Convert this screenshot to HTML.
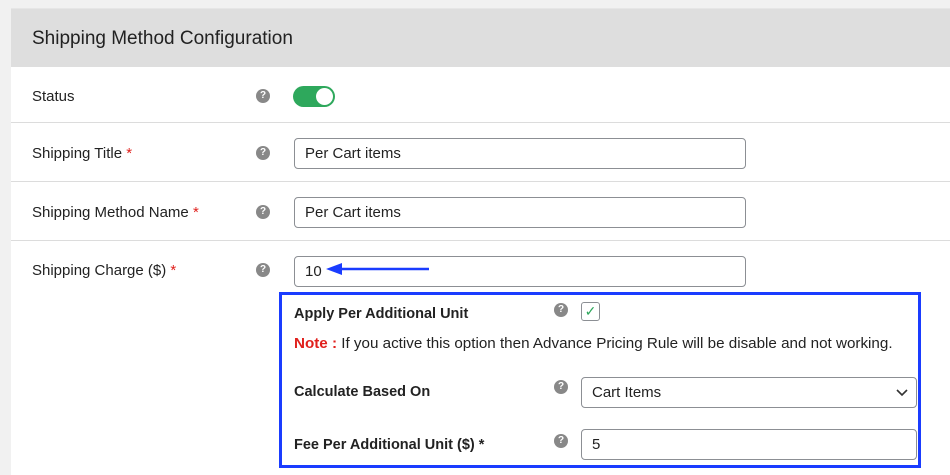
<!DOCTYPE html>
<html><head><style>
body{margin:0;width:950px;height:475px;background:#f1f1f1;font-family:"Liberation Sans",Arial,sans-serif;color:#1d2327;position:relative;overflow:hidden}
.panel{position:absolute;left:11px;top:8px;width:939px;height:467px;background:#fff}
.hdr{position:absolute;left:0;top:0;width:939px;height:58px;background:#dedede;border-top:1px solid #e6e6e6}
.hdr span{position:absolute;left:21px;top:19px;font-size:19px;color:#222}
.line{position:absolute;left:11px;width:939px;height:1px;background:#dcdcdc}
.lab{position:absolute;left:32px;font-size:15px;color:#222}
.req{color:#e0201c}
.q{position:absolute;width:14px;height:14px;border-radius:50%;background:#888;color:#fff;font-size:10px;font-weight:bold;text-align:center;line-height:14px}
.inp{position:absolute;border:1px solid #8c8f94;border-radius:4px;background:#fff;font-size:15px;box-sizing:border-box;padding-left:10px;color:#222}
.b{font-weight:bold;font-size:14.5px;position:absolute;color:#222}
</style></head><body>
<div class="panel"><div class="hdr"><span>Shipping Method Configuration</span></div></div>
<div class="line" style="top:122px"></div>
<div class="line" style="top:181px"></div>
<div class="line" style="top:240px"></div>

<div class="lab" style="top:88px">Status</div>
<div class="q" style="left:256px;top:89px">?</div>
<div style="position:absolute;left:293px;top:86px;width:42px;height:21px;border-radius:11px;background:#2ea85c"></div>
<div style="position:absolute;left:316px;top:88px;width:17px;height:17px;border-radius:50%;background:#fff"></div>

<div class="lab" style="top:145px">Shipping Title <span class="req">*</span></div>
<div class="q" style="left:256px;top:146px">?</div>
<div class="inp" style="left:294px;top:138px;width:452px;height:31px;line-height:29px">Per Cart items</div>

<div class="lab" style="top:204px">Shipping Method Name <span class="req">*</span></div>
<div class="q" style="left:256px;top:205px">?</div>
<div class="inp" style="left:294px;top:197px;width:452px;height:31px;line-height:29px">Per Cart items</div>

<div class="lab" style="top:262px">Shipping Charge ($) <span class="req">*</span></div>
<div class="q" style="left:256px;top:263px">?</div>
<div class="inp" style="left:294px;top:256px;width:452px;height:31px;line-height:29px">10</div>
<svg style="position:absolute;left:326px;top:262px" width="106" height="14"><line x1="12" y1="7" x2="103" y2="7" stroke="#1a3cff" stroke-width="2.5"/><polygon points="0,7 16,1 16,13" fill="#1a3cff"/></svg>

<div style="position:absolute;left:279px;top:292px;width:636px;height:170px;border:3px solid #1a3cff"></div>
<div class="b" style="left:294px;top:306px">Apply Per Additional Unit</div>
<div class="q" style="left:554px;top:303px">?</div>
<div style="position:absolute;left:581px;top:302px;width:17px;height:17px;border:1px solid #8c8f94;border-radius:3px;background:#fff;color:#2ea85c;font-size:14px;line-height:17px;text-align:center">&#10003;</div>
<div style="position:absolute;left:294px;top:335px;font-size:15.2px;color:#222"><span style="color:#e0201c;font-weight:bold">Note :</span> If you active this option then Advance Pricing Rule will be disable and not working.</div>

<div class="b" style="left:294px;top:384px">Calculate Based On</div>
<div class="q" style="left:554px;top:380px">?</div>
<div class="inp" style="left:581px;top:377px;width:336px;height:31px;line-height:29px">Cart Items
<svg style="position:absolute;right:8px;top:11px" width="12" height="8"><path d="M1 1 L6 6 L11 1" fill="none" stroke="#333" stroke-width="1.6"/></svg></div>

<div class="b" style="left:294px;top:437px">Fee Per Additional Unit ($) *</div>
<div class="q" style="left:554px;top:434px">?</div>
<div class="inp" style="left:581px;top:429px;width:336px;height:31px;line-height:29px">5</div>
</body></html>
